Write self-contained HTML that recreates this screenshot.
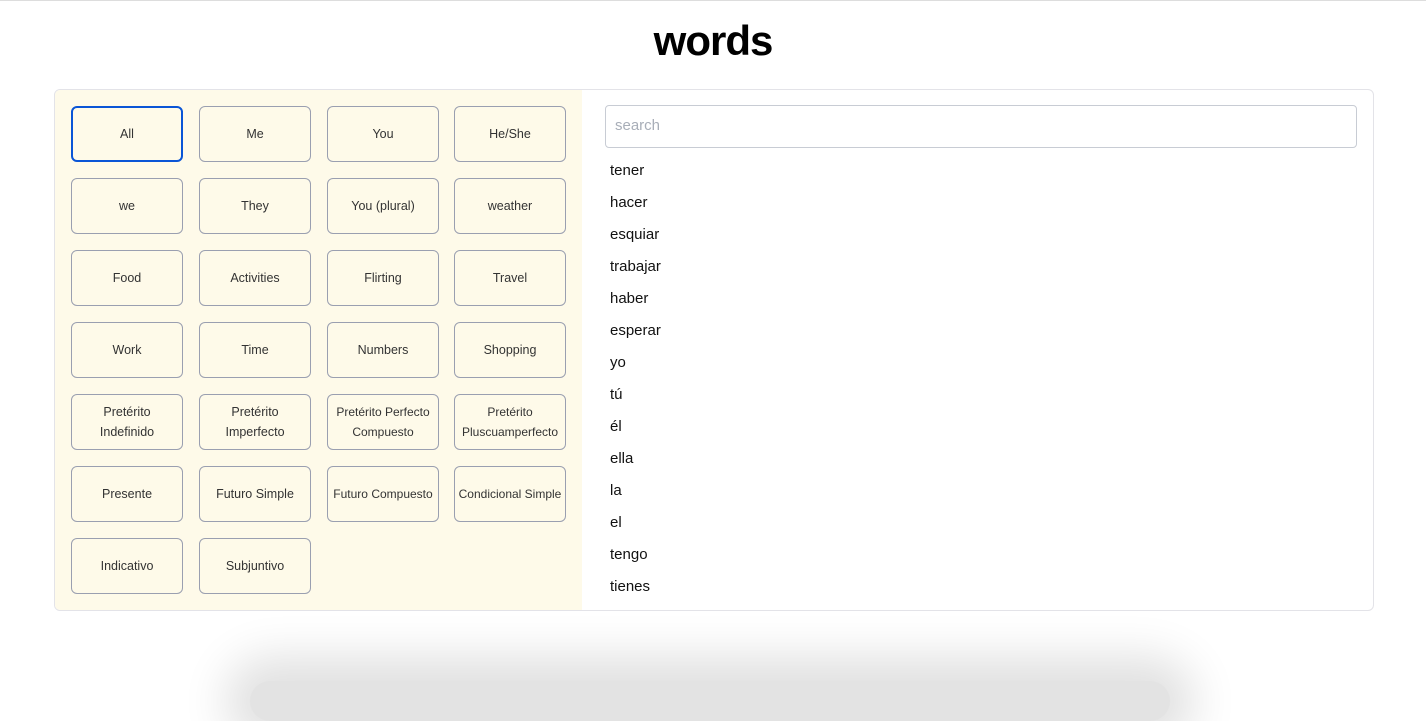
<!DOCTYPE html>
<html><head><style>
body{margin:0;width:1426px;height:665px;overflow:hidden;background:#fff;font-family:"Liberation Sans",sans-serif;position:relative;border-top:1px solid #ddd;box-sizing:border-box}
h1{position:absolute;left:0;width:1426px;top:16px;margin:0;text-align:center;font-size:42px;font-weight:bold;color:#000;letter-spacing:-1px}
.box{position:absolute;left:54px;top:88px;width:1318px;height:520px;border:1px solid #e3e3e8;border-radius:6px;overflow:hidden}
.left{position:absolute;left:0;top:0;width:527px;height:520px;background:#fefae9}
.b{position:absolute;width:112px;height:56px;border:1px solid #9a9fb0;border-radius:6px;background:#fefae9;display:flex;align-items:center;justify-content:center;text-align:center;font-size:12.5px;color:#333;line-height:20px;box-sizing:border-box}
.b.sel{border:2px solid #0a55d6}
.s{position:absolute;left:550px;top:15px;width:752px;height:43px;border:1px solid #c8ccd4;border-radius:4px;box-sizing:border-box;padding:11px 9px;font-size:15px;color:#a8aeb8}
.w{position:absolute;left:555px;font-size:15px;color:#111}
.sh{position:absolute;left:250px;top:680px;width:920px;height:40px;border-radius:30px;box-shadow:0 0 45px 25px rgba(0,0,0,.12);background:#e3e3e3}
</style></head><body>
<h1>words</h1>
<div class="box">
<div class="left">
<div class="b sel" style="left:16px;top:16px">All</div>
<div class="b" style="left:144px;top:16px">Me</div>
<div class="b" style="left:272px;top:16px">You</div>
<div class="b" style="left:399px;top:16px">He/She</div>
<div class="b" style="left:16px;top:88px">we</div>
<div class="b" style="left:144px;top:88px">They</div>
<div class="b" style="left:272px;top:88px">You (plural)</div>
<div class="b" style="left:399px;top:88px">weather</div>
<div class="b" style="left:16px;top:160px">Food</div>
<div class="b" style="left:144px;top:160px">Activities</div>
<div class="b" style="left:272px;top:160px">Flirting</div>
<div class="b" style="left:399px;top:160px">Travel</div>
<div class="b" style="left:16px;top:232px">Work</div>
<div class="b" style="left:144px;top:232px">Time</div>
<div class="b" style="left:272px;top:232px">Numbers</div>
<div class="b" style="left:399px;top:232px">Shopping</div>
<div class="b" style="left:16px;top:304px">Pretérito<br>Indefinido</div>
<div class="b" style="left:144px;top:304px">Pretérito<br>Imperfecto</div>
<div class="b" style="left:272px;top:304px;font-size:12px">Pretérito Perfecto<br>Compuesto</div>
<div class="b" style="left:399px;top:304px;font-size:12px">Pretérito<br>Pluscuamperfecto</div>
<div class="b" style="left:16px;top:376px">Presente</div>
<div class="b" style="left:144px;top:376px">Futuro Simple</div>
<div class="b" style="left:272px;top:376px;font-size:12px">Futuro Compuesto</div>
<div class="b" style="left:399px;top:376px;font-size:12px">Condicional Simple</div>
<div class="b" style="left:16px;top:448px">Indicativo</div>
<div class="b" style="left:144px;top:448px">Subjuntivo</div>
</div>
<div class="s">search</div>
<div class="w" style="top:72px">tener</div>
<div class="w" style="top:104px">hacer</div>
<div class="w" style="top:136px">esquiar</div>
<div class="w" style="top:168px">trabajar</div>
<div class="w" style="top:200px">haber</div>
<div class="w" style="top:232px">esperar</div>
<div class="w" style="top:264px">yo</div>
<div class="w" style="top:296px">tú</div>
<div class="w" style="top:328px">él</div>
<div class="w" style="top:360px">ella</div>
<div class="w" style="top:392px">la</div>
<div class="w" style="top:424px">el</div>
<div class="w" style="top:456px">tengo</div>
<div class="w" style="top:488px">tienes</div>
</div>
<div class="sh"></div>
</body></html>
